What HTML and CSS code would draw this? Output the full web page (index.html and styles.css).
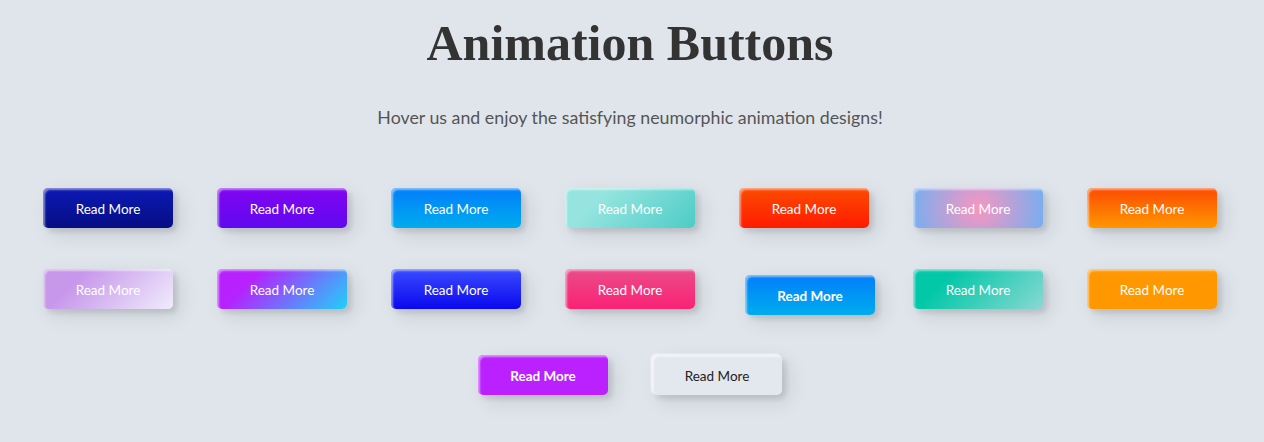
FILE: index.html
```html
<!DOCTYPE html>
<html>
<head>
<meta charset="utf-8">
<link rel="stylesheet" href="styles.css">
</head>
<body>
<div class="page">
  <h1 class="title">Animation Buttons</h1>
  <p class="subtitle">Hover us and enjoy the satisfying neumorphic animation designs!</p>
  <div class="row row-1">
    <button class="btn btn-1">Read More</button>
    <button class="btn btn-2">Read More</button>
    <button class="btn btn-3">Read More</button>
    <button class="btn btn-4">Read More</button>
    <button class="btn btn-5">Read More</button>
    <button class="btn btn-6">Read More</button>
    <button class="btn btn-7">Read More</button>
  </div>
  <div class="row row-2">
    <button class="btn btn-8">Read More</button>
    <button class="btn btn-9">Read More</button>
    <button class="btn btn-10">Read More</button>
    <button class="btn btn-11">Read More</button>
    <button class="btn btn-12">Read More</button>
    <button class="btn btn-13">Read More</button>
    <button class="btn btn-14">Read More</button>
  </div>
  <div class="row row-3">
    <button class="btn btn-15">Read More</button>
    <button class="btn btn-16">Read More</button>
  </div>
</div>
</body>
</html>
```
FILE: styles.css
```css
html, body {
  margin: 0;
  padding: 0;
  background: #e0e5ec;
}
.page {
  width: 1260px;
  padding-bottom: 40px;
  display: flex;
  flex-direction: column;
  align-items: center;
}
.title {
  margin: 14px 0 0;
  font-family: "Liberation Serif", serif;
  font-weight: bold;
  font-size: 50px;
  line-height: 58px;
  color: #333;
}
.subtitle {
  margin: 32px 0 0;
  font-family: Lato, sans-serif;
  font-size: 17.8px;
  line-height: 26px;
  color: #555;
}
.row {
  display: flex;
  justify-content: center;
  align-items: flex-start;
  gap: 44px;
}
.row-1 { margin-top: 58px; }
.row-2 { margin-top: 41px; }
.row-3 { margin-top: 46px; }
.btn {
  width: 130px;
  height: 40px;
  padding: 2px 0 0;
  border: none;
  border-radius: 5px;
  font-family: Lato, sans-serif;
  font-size: 13.5px;
  font-weight: 400;
  color: #fff;
  background: transparent;
  box-shadow: inset 2px 2px 2px 0 rgba(255,255,255,.5),
              7px 7px 20px 0 rgba(0,0,0,.1),
              4px 4px 5px 0 rgba(0,0,0,.1);
}
.btn-1 { background: linear-gradient(0deg, #060e83 0%, #0c19b4 100%); }
.btn-2 { background: linear-gradient(0deg, #6009f0 0%, #8105f0 100%); }
.btn-3 { background: linear-gradient(0deg, #00acee 0%, #027efb 100%); }
.btn-4 { background: linear-gradient(315deg, #4dccc6 0%, #96e4df 74%); }
.btn-5 { background: linear-gradient(0deg, #ff1b00 0%, #fb4b02 100%); }
.btn-6 { background: radial-gradient(circle, #f796c0 0%, #76aef1 100%); }
.btn-7 { background: linear-gradient(0deg, #ff9700 0%, #fb4b02 100%); }
.btn-8 { background: linear-gradient(315deg, #f0ecfc 0%, #c797eb 74%); }
.btn-9 { background: linear-gradient(315deg, #1fd1f9 0%, #b621fe 74%); }
.btn-10 { background: linear-gradient(0deg, #0a08ee 0%, #3a4bff 100%); }
.btn-11 { background: linear-gradient(0deg, #fb2175 0%, #ea4c89 100%); }
.btn-12 {
  background: linear-gradient(0deg, #00acee 0%, #027efb 100%);
  font-weight: bold;
  transform: translate(6px, 6px);
}
.btn-13 { background: linear-gradient(315deg, #89d8d3 0%, #03c8a8 74%); }
.btn-14 { background: #ff9700; }
.btn-15 { background: #bb21fe; font-weight: bold; }
.btn-16 {
  background: #e3e7ee;
  color: #222;
  box-shadow: -1px -1px 2px 0 rgba(255,255,255,.8),
              inset 2px 2px 2px 0 rgba(255,255,255,.5),
              7px 7px 20px 0 rgba(0,0,0,.1),
              4px 4px 5px 0 rgba(0,0,0,.1);
}
```
